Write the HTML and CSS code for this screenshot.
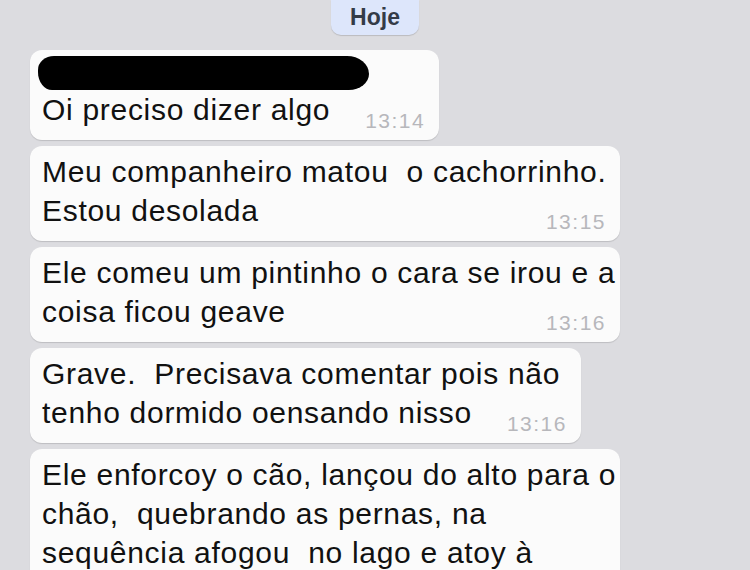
FILE: index.html
```html
<!DOCTYPE html>
<html>
<head>
    <title>Conversa</title>
    <link rel="stylesheet" href="styles.css">
</head>
<body>
    <div class="chat">
        <div class="day">Hoje</div>

        <div class="bubble">
            <div class="redacted"></div>
            <div class="last"><span>Oi preciso dizer algo</span><span class="time">13:14</span></div>
        </div>

        <div class="bubble full">
            <div>Meu companheiro matou&nbsp; o cachorrinho.</div>
            <div class="last"><span>Estou desolada</span><span class="time">13:15</span></div>
        </div>

        <div class="bubble full">
            <div>Ele comeu um pintinho o cara se irou e a</div>
            <div class="last"><span>coisa ficou geave</span><span class="time">13:16</span></div>
        </div>

        <div class="bubble">
            <div>Grave.&nbsp; Precisava comentar pois não</div>
            <div class="last"><span>tenho dormido oensando nisso</span><span class="time">13:16</span></div>
        </div>

        <div class="bubble full">
            <div>Ele enforcoy o cão, lançou do alto para o</div>
            <div>chão,&nbsp; quebrando as pernas, na</div>
            <div>sequência afogou&nbsp; no lago e atoy à</div>
        </div>
    </div>
</body>
</html>
```

FILE: styles.css
```css
html {
    background: #dcdce0;
}
body {
    margin: 0;
    font-family: "Liberation Sans", Arial, sans-serif;
    color: #111;
    overflow: hidden;
}
.chat {
    display: flex;
    flex-direction: column;
    align-items: flex-start;
    gap: 6px;
    padding: 0 30px;
}
.day {
    align-self: center;
    height: 35px;
    line-height: 35px;
    padding: 0 19px;
    margin-bottom: 9px;
    background: #dde6fb;
    color: #343b47;
    font-size: 23px;
    font-weight: bold;
    border-radius: 0 0 10px 10px;
    box-shadow: 0 1px 1px rgba(0,0,0,0.15);
}
.bubble {
    background: #fbfbfb;
    border-radius: 12px;
    padding: 6px 14px 11px 12px;
    font-size: 30px;
    line-height: 39px;
    letter-spacing: 0.7px;
    white-space: nowrap;
    box-shadow: 0 1px 1px rgba(0,0,0,0.14);
}
.bubble.full {
    width: 590px;
    box-sizing: border-box;
}
.redacted {
    width: 331px;
    height: 34px;
    margin-left: -4px;
    background: #000;
    border-radius: 16px 22px 20px 14px / 14px 18px 16px 18px;
}
.last {
    display: flex;
    justify-content: space-between;
    align-items: flex-end;
    gap: 35px;
}
.time {
    font-size: 21px;
    line-height: 21px;
    letter-spacing: 1.5px;
    color: #b7b7bb;
    margin-bottom: -2px;
}
```
